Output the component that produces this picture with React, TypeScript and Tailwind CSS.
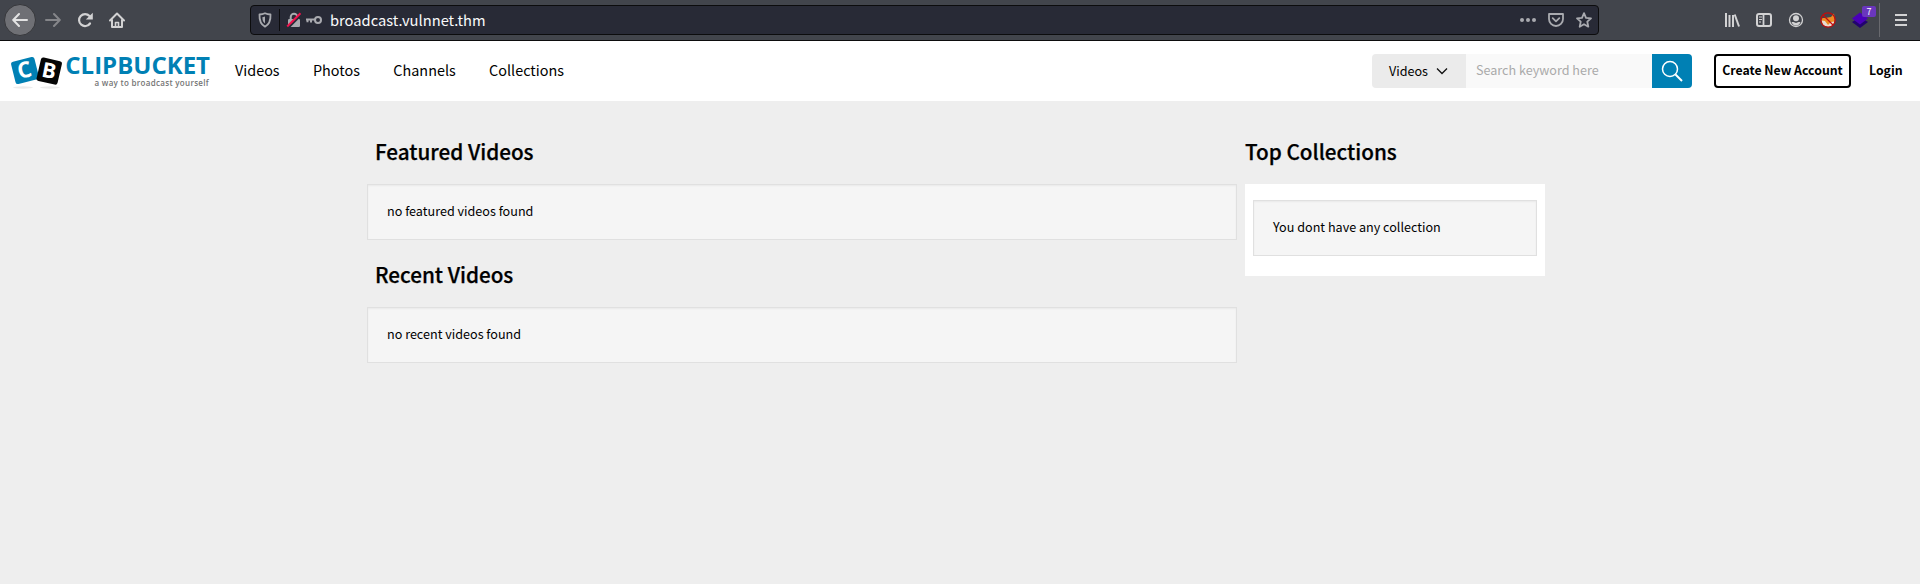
import React from "react";

const site = "font-['Noto_Sans_CJK_JP','Noto_Sans_CJK_SC',sans-serif]";

function BrowserBar() {
  return (
    <div className="flex h-[41px] shrink-0 items-center border-b border-[#0c0c0d] bg-[#42454c] pl-1 text-[#d2d2d3]">
      <div className="flex size-8 items-center justify-center rounded-full border border-[#36373b] bg-[#6f7075]">
        <svg width="16" height="16" viewBox="0 0 16 16" fill="none" stroke="#e3e3e3" strokeWidth="2" strokeLinecap="round" strokeLinejoin="round"><path d="M15 8H1.500M7 2L1.200 8l5.800 6" /></svg>
      </div>
      <svg className="ml-[9px]" width="16" height="16" viewBox="0 0 16 16" fill="none" stroke="#85868a" strokeWidth="2" strokeLinecap="round" strokeLinejoin="round"><path d="M1 8h13.500M9 2l5.800 6L9 14" /></svg>
      <svg className="ml-4" width="16" height="16" viewBox="0 0 16 16" fill="none" stroke="currentColor" strokeWidth="2.200"><path d="M13 11.500A6 6 0 1 1 12.500 4" strokeLinecap="round" /><path d="M15.800.8v6.700H8.800z" fill="currentColor" stroke="none" /></svg>
      <svg className="ml-4" width="16" height="16" viewBox="0 0 16 16" fill="none" stroke="currentColor" strokeWidth="2" strokeLinecap="round" strokeLinejoin="round"><path d="M1 8.500L8 1.500l7 7M3 8v7h10V8" /><path d="M6.500 15v-4.500h3V15" strokeWidth="1.600" /></svg>
      <div className="ml-[125px] flex h-[30px] w-[1349px] items-center rounded-[4px] border border-[#0c0c0d] bg-[#282a36] text-[#a9aaaf]">
        <svg className="ml-[7px]" width="14" height="16" viewBox="0 0 14 16" fill="none" stroke="currentColor" strokeWidth="1.800" strokeLinejoin="round"><path d="M7 1.200c2 .9 3.800 1.200 5.500 1.300C12.800 8.500 11 12.500 7 14.700 3 12.500 1.200 8.500 1.500 2.500 3.200 2.400 5 2.100 7 1.200z" /><path d="M7 4.500v7C5 10 4.400 8 4.400 5.200z" fill="currentColor" stroke="none" /></svg>
        <div className="ml-[7px] h-[22px] w-px bg-[#0c0c0d]" />
        <svg className="ml-[6px]" width="16" height="16" viewBox="0 0 16 16"><path d="M4.700 7V5a3.300 3.300 0 0 1 6.600 0v2" fill="none" stroke="currentColor" strokeWidth="2" /><rect x="2" y="7" width="12" height="8" rx="1.200" fill="currentColor" /><path d="M2 15.500L15.500 2" stroke="#282a36" strokeWidth="3" /><path d="M1.200 14.500L14.500 1.200" stroke="#f0134d" strokeWidth="2" /></svg>
        <svg className="ml-1" width="16" height="16" viewBox="0 0 16 16" fill="none" stroke="currentColor" strokeWidth="2"><circle cx="12" cy="8" r="3" /><path d="M9 7.500H0M1.500 8v2.300M5 8v2.500" /></svg>
        <span className="ml-2 text-[14.7px] leading-5 text-[#f9f9fa]">broadcast.vulnnet.thm</span>
        <svg className="ml-auto" width="16" height="16" viewBox="0 0 16 16" fill="currentColor"><circle cx="2" cy="8" r="2" /><circle cx="8" cy="8" r="2" /><circle cx="14" cy="8" r="2" /></svg>
        <svg className="ml-3" width="16" height="16" viewBox="0 0 16 16" fill="none" stroke="currentColor" strokeWidth="1.800" strokeLinecap="round" strokeLinejoin="round"><path d="M1 2h14v5a7 7 0 0 1-14 0z" /><path d="M4.700 6.200L8 9.400l3.300-3.200" /></svg>
        <svg className="mr-[6px] ml-3" width="16" height="16" viewBox="0 0 16 16" fill="none" stroke="currentColor" strokeWidth="1.800" strokeLinejoin="round"><path d="M8 1.200l2 4.600 5 .5-3.700 3.400 1 5L8 12.200l-4.300 2.500 1-5L1 6.300l5-.5z" /></svg>
      </div>
      <svg className="ml-[125px]" width="16" height="16" viewBox="0 0 16 16" fill="none" stroke="currentColor" strokeWidth="2"><path d="M2 1v14M5.500 3v12M9 3v12" /><path d="M10.700 2.500L15 14.500" /></svg>
      <svg className="ml-4" width="16" height="16" viewBox="0 0 16 16" fill="none" stroke="currentColor"><rect x="1" y="2" width="14" height="12" rx="2" strokeWidth="2" /><path d="M7.500 2v12" strokeWidth="1.800" /><path d="M3 5h3M3 7.500h3M3 10h2" /></svg>
      <svg className="ml-4" width="16" height="16" viewBox="0 0 16 16"><circle cx="8" cy="8" r="6.500" fill="none" stroke="currentColor" strokeWidth="1.300" /><circle cx="8" cy="6.200" r="3" fill="currentColor" /><path d="M3.500 10h2l2.500 1 2.500-1h2C11.500 12.800 10 13.600 8 13.600S4.500 12.800 3.500 10z" fill="currentColor" /></svg>
      <svg className="ml-4" width="16" height="16" viewBox="0 0 16 16"><path d="M1.500 8l1-2 2.500 0L11 5l3-3.500.8 6.500-1.800 5L8 14.500l-5-1.500z" fill="#ee8b22" /><path d="M1.500 8.500L5 9l3 4 3-3 3.500-.5-2 4-4 1.500-5-1.500z" fill="#e9dcd2" /><path d="M5 8.500l3 3.500 2.500-2.500" fill="#ee8b22" /><circle cx="8" cy="8" r="7.200" fill="none" stroke="#c20d0d" strokeWidth="1.300" /><path d="M3 3l10 10" stroke="#c20d0d" strokeWidth="1.300" /></svg>
      <div className="relative ml-4 size-4">
        <svg width="16" height="16" viewBox="0 0 16 16"><path d="M0 10l8-5 8 5-8 6z" fill="#22036f" /><path d="M0 6.500L8 .5l8 6-8 6z" fill="#4a00b8" /></svg>
        <span className="absolute -top-[6px] left-[10px] flex h-[11px] w-[14px] items-center justify-center rounded-[2px] bg-[#6a36bd] text-[9px] leading-none text-white">7</span>
      </div>
      <div className="ml-[11px] h-[34px] w-px bg-[#68696e]" />
      <svg className="ml-[13px]" width="16" height="16" viewBox="0 0 16 16" stroke="currentColor" strokeWidth="2"><path d="M2 3h12M2 8h12M2 13h12" /></svg>
    </div>
  );
}

function Logo() {
  return (
    <div className="flex h-[60px] w-[210px] shrink-0 items-start pt-[13px] pl-[9px]">
      <svg className="shrink-0" width="56" height="36" viewBox="0 0 56 36">
        <ellipse cx="14" cy="33.500" rx="10" ry="1.200" fill="#ececec" />
        <ellipse cx="41" cy="33.500" rx="10" ry="1.200" fill="#ececec" />
        <rect x="4" y="5" width="24" height="23" rx="2.500" fill="#0080b4" transform="rotate(-14 16 16.500)" />
        <rect x="29.500" y="5" width="21.500" height="24" rx="2.500" fill="#050505" transform="rotate(13 40 17)" />
        <text x="15.500" y="23.500" textAnchor="middle" className="font-['Open_Sans',sans-serif] text-[22px] font-bold" fill="#fff" transform="rotate(-13 16 16)">C</text>
        <text x="40" y="24" textAnchor="middle" className="font-['Open_Sans',sans-serif] text-[21px] font-bold" fill="#fff" transform="rotate(11 40 17)">B</text>
      </svg>
      <div className="flex w-[145px] shrink-0 flex-col items-end">
        <span className="font-['Open_Sans',sans-serif] text-[24px] leading-[22px] font-bold text-[#0080b4]">CLIPBUCKET</span>
        <span className="mt-[2px] mr-px font-['Open_Sans',sans-serif] text-[8px] leading-[10px] font-semibold tracking-[0.3px] whitespace-nowrap text-[#757575]">a way to broadcast yourself</span>
      </div>
    </div>
  );
}

function Header() {
  return (
    <header className="flex h-[60px] shrink-0 items-center bg-white text-black">
      <Logo />
      <nav className="ml-[25px] flex gap-[33.4px] pb-[3px] text-[14.4px] leading-5">
        <a>Videos</a>
        <a>Photos</a>
        <a>Channels</a>
        <a>Collections</a>
      </nav>
      <div className="ml-auto flex h-[34px] w-[320px] overflow-hidden rounded-[4px] text-[12.6px]">
        <div className="flex w-[94px] items-center bg-[#ebebeb] pl-[17px] leading-5">
          Videos
          <svg className="ml-[8px]" width="12" height="8" viewBox="0 0 12 8" fill="none" stroke="#111" strokeWidth="1.300"><path d="M1 1.500l5 5 5-5" /></svg>
        </div>
        <div className="flex w-[186px] items-center bg-[#f9f9f9] pb-[2px] pl-[10px] leading-5 text-[#aaaaaa]">Search keyword here</div>
        <div className="flex w-10 items-center justify-center bg-[#0080b4]">
          <svg width="22" height="22" viewBox="0 0 22 22" fill="none" stroke="#fff" strokeWidth="1.500"><circle cx="9" cy="9" r="7.500" /><path d="M14.500 14.500L21 21" strokeWidth="2" /></svg>
        </div>
      </div>
      <div className="ml-[22px] flex h-[34px] w-[137px] items-center justify-center rounded-[4px] border-2 border-black pb-[2px] text-[12.3px] leading-5 font-bold whitespace-nowrap">Create New Account</div>
      <div className="mr-[18px] ml-[18px] w-[33px] pb-[2px] text-[12.3px] leading-5 font-bold whitespace-nowrap">Login</div>
    </header>
  );
}

function Notice({ children }: { children: React.ReactNode }) {
  return <div className="h-14 border border-[#e0e0e0] bg-[#f5f5f5] pt-4 pl-[19px] text-[12.6px] leading-5 text-black shadow-[inset_0_1px_2px_rgba(0,0,0,0.05)]">{children}</div>;
}

function Heading({ children }: { children: React.ReactNode }) {
  return <h2 className="mb-[18px] h-[30px] text-[20.7px] leading-[30px] font-medium text-black [-webkit-text-stroke:0.25px_black]">{children}</h2>;
}

export default function App() {
  return (
    <div className={site + " flex h-[584px] w-[1920px] flex-col overflow-hidden bg-[#eeeeee]"}>
      <BrowserBar />
      <Header />
      <main className="flex gap-2 pt-[35px] pl-[367px]">
        <div className="flex w-[870px] flex-col">
          <div className="pl-2"><Heading>Featured Videos</Heading></div>
          <Notice>no featured videos found</Notice>
          <div className="mt-[19px] pl-2"><Heading>Recent Videos</Heading></div>
          <Notice>no recent videos found</Notice>
        </div>
        <aside className="w-[300px]">
          <Heading>Top Collections</Heading>
          <div className="h-[92px] bg-white px-2 pt-4"><Notice>You dont have any collection</Notice></div>
        </aside>
      </main>
    </div>
  );
}
